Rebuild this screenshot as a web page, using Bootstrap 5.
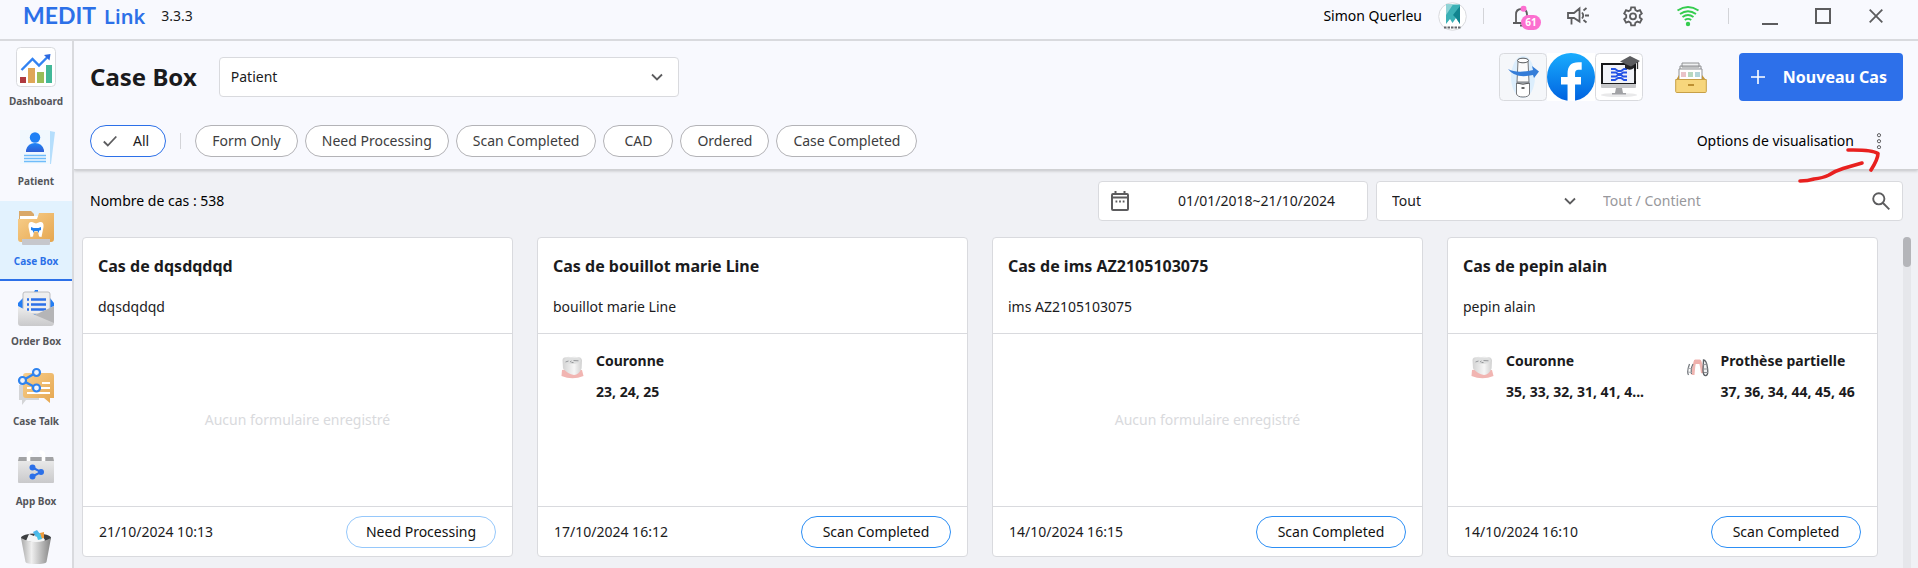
<!DOCTYPE html>
<html lang="fr">
<head>
<meta charset="utf-8">
<meta name="viewport" content="width=device-width, initial-scale=1">
<title>MEDIT Link - Case Box</title>
<link href="https://cdn.jsdelivr.net/npm/bootstrap@5.3.0/dist/css/bootstrap.min.css" rel="stylesheet">
<style>
  :root { --ml-blue: #2c70e8; --ml-line: #d9dade; --ml-top: #f8f9fe; --ml-grey: #5c5c5e; }
  body { font-family: "Noto Sans", "Open Sans", sans-serif; font-size: 14px; line-height: 20px; color: #1b1b1d; background: #f0f1f5; }
  svg { display: block; flex: none; }
  .titlebar { background: var(--ml-top); border-bottom: 2px solid var(--ml-line); padding: 0 16px 7px 23px; }
  .titlebar-row { height: 32px; }
  .brand { color: var(--ml-blue); font-size: 20px; font-weight: 600; line-height: 32px; gap: 8px; }
  .brand-first { font-family: Lato, "Noto Sans", sans-serif; font-weight: 700; font-size: 23px; }
  .tool-btn { width: 55px; height: 32px; padding: 0; border: 0; background: none; color: var(--ml-grey); display: flex; align-items: center; justify-content: center; position: relative; }
  .win-btn { width: 53px; }
  .tool-group { margin-left: 11px; }
  .tool-split { margin: 0 14px 0 13px; }
  .count-pill { position: absolute; left: 26px; top: 15px; width: 20px; height: 15px; border-radius: 8px; background: #fc6fd0; color: #fff; font-size: 10px; font-weight: 700; line-height: 15px; text-align: center; }
  .v-line { width: 1px; height: 16px; background: #d3d4d8; }
  .side { width: 74px; flex: none; background: var(--ml-top); border-right: 2px solid var(--ml-line); overflow: hidden; }
  .side-link { height: 80px; flex: none; padding-top: 6px; color: #55565a; font-size: 10px; font-weight: 700; line-height: 16px; text-decoration: none; display: flex; flex-direction: column; align-items: center; gap: 6px; }
  .side-link.active { background: #e2f2fe; color: var(--ml-blue); border-bottom: 2px solid var(--ml-blue); }
  .page-head { background: var(--ml-top); padding: 12px 15px 12px 16px; border-bottom: 1px solid #d0d1d3; box-shadow: 0 1px 3px rgba(0,0,0,.2); position: relative; }
  .page-title { font-size: 24px; line-height: 32px; font-weight: 700; margin: 0 22px 0 0; }
  .form-select { font-size: 14px; line-height: 20px; color: #1b1b1d; background-color: #fff; border: 1px solid var(--ml-line); border-radius: 4px; height: 40px; padding: 0 40px 0 11px;
    background-image: url("data:image/svg+xml,%3csvg xmlns='http://www.w3.org/2000/svg' viewBox='0 0 12 12'%3e%3cpath fill='none' stroke='%235c5c5e' stroke-width='1.8' d='M1 3.500l5 5 5-5'/%3e%3c/svg%3e"); background-size: 12px 12px; background-position: right 15px center; }
  .view-select { width: 460px; }
  .filter-row { gap: 7px; }
  .pill { height: 32px; border: 1px solid #b3b3b7; border-radius: 16px; background: #fff; color: #3d3d40; padding: 0 16px; min-width: 70px; line-height: 20px; white-space: nowrap; }
  .pill.active { border-color: var(--ml-blue); color: #1b1b1d; padding-left: 12px; }
  .pill-split { margin: 0 7px; }
  .view-options { font-size: 14px; line-height: 20px; gap: 22px; padding: 0 21px 0 0; border: 0; background: none; color: #000; }
  .new-case { width: 164px; height: 48px; border-radius: 4px; background: #2d70ea; color: #fff; font-size: 16px; font-weight: 700; padding: 0 16px 0 12px; border: 0; }
  .ink { position: absolute; right: 37px; top: 107px; pointer-events: none; }
  .list-bar { padding: 11px 15px 16px 16px; }
  .field { height: 40px; background: #fff; border: 1px solid var(--ml-line); border-radius: 4px; overflow: hidden; }
  .field input { border: 0; background: none; outline: 0; min-width: 0; color: #1b1b1d; }
  .field input::placeholder { color: #98989c; opacity: 1; }
  .field .form-select { border: 0; height: 38px; width: 208px; padding-left: 15px; background-position: right 9px center; }
  .date-field { width: 270px; padding-left: 11px; }
  .find-field { width: 527px; }
  .list-area { padding: 0 7px 0 8px; gap: 25px; min-height: 0; }
  .case { border: 1px solid var(--ml-line); border-radius: 4px; background: #fff; height: 320px; display: flex; flex-direction: column; }
  .case-head { height: 95px; padding: 17px 15px 0; }
  .case-head h2 { font-size: 16px; line-height: 22px; font-weight: 700; margin: 0 0 20px; }
  .case-body { flex: 1; border-top: 1px solid var(--ml-line); border-bottom: 1px solid var(--ml-line); }
  .case-foot { height: 49px; padding: 0 16px; }
  .state { width: 150px; height: 32px; border: 1px solid #2d8ff5; border-radius: 16px; background: #fff; color: #111; padding: 0; }
  .state-wait { border-color: #96c8fb; }
  .empty-note { color: #d9dadd; }
  .part { padding: 17px 0 0 23px; gap: 12px; font-weight: 700; }
  .part p { margin: 0 0 11px; }
  .part svg { margin-top: 5px; }
  .track { width: 8px; flex: none; background: #e6e7eb; border-radius: 4px 4px 0 0; }
  .thumb { height: 30px; border-radius: 4px; background: #b4b5b9; }
</style>
</head>
<body class="vh-100 overflow-hidden d-flex flex-column">

<svg width="0" height="0" class="position-absolute" aria-hidden="true">
  <defs>
    <linearGradient id="gFolder" x1="0" y1="0" x2="1" y2="1"><stop offset="0" stop-color="#f8cf8c"/><stop offset="1" stop-color="#e5a64f"/></linearGradient>
    <linearGradient id="gGrey" x1="0" y1="0" x2="0" y2="1"><stop offset="0" stop-color="#eeeeee"/><stop offset="1" stop-color="#c9c9cb"/></linearGradient>
    <linearGradient id="gCan" x1="0" y1="0" x2="1" y2="0"><stop offset="0" stop-color="#a9a9a9"/><stop offset=".35" stop-color="#efefef"/><stop offset="1" stop-color="#858585"/></linearGradient>
    <linearGradient id="gBlue" x1="0" y1="0" x2="0" y2="1"><stop offset="0" stop-color="#1e86f8"/><stop offset="1" stop-color="#2f5cd2"/></linearGradient>
    <linearGradient id="gFb" x1="0" y1="0" x2="0" y2="1"><stop offset="0" stop-color="#18acfe"/><stop offset="1" stop-color="#0163e0"/></linearGradient>
    <linearGradient id="gTooth" x1="0" y1="0" x2="1" y2="0"><stop offset="0" stop-color="#d3d3d3"/><stop offset=".6" stop-color="#f6f6f6"/><stop offset="1" stop-color="#d0d0d0"/></linearGradient>
    <symbol id="crown" viewBox="0 0 23 23">
      <path d="M1 14q10-2 20 0l1.500 6q-11 4.500-22 0z" fill="#f1b5b2"/>
      <path d="M1.500 4Q2 .8 5 1.200q2.500-1 5 0 3-1.200 6 0 4-.6 5 3l-.4 8.300Q18 18.500 13 19 7 18 2 12.500z" fill="url(#gTooth)"/>
      <ellipse cx="11.300" cy="4.800" rx="8.500" ry="3.200" fill="#dedfdf"/>
      <path d="M4.500 6l3-1M9 6l1.500-1M12.500 4.500l5 .3M10.500 6.500h2" stroke="#96989b" fill="none"/>
    </symbol>
  </defs>
</svg>

<header class="titlebar">
  <div class="titlebar-row d-flex align-items-center">
    <div class="brand d-flex align-items-baseline text-nowrap"><span class="brand-first">MEDIT</span><span>Link</span></div>
    <span class="ms-3">3.3.3</span>
    <span class="ms-auto text-black">Simon Querleu</span>
    <svg class="ms-3" width="29" height="29" viewBox="0 0 29 29"><circle cx="14.500" cy="14.500" r="13.800" fill="#fff" stroke="#d9dade"/><path d="M8 2.500h14V22l-4-6-3.500 5L12 17l-4 5z" fill="#3cb1b6"/><path d="M8 2.500h7L8 13z" fill="#8fd3d6"/><path d="M22 4v18l-4-6-3-3z" fill="#11848f"/><path d="M6 25.500h17" stroke="#65676b" stroke-width="2" stroke-dasharray="2.500 1"/></svg>
    <span class="v-line ms-3"></span>
    <div class="d-flex tool-group">
      <button class="tool-btn" type="button" aria-label="Notifications">
        <svg width="22" height="22" viewBox="0 0 22 22" fill="none" stroke="currentColor" stroke-width="1.800"><path d="M1 18h14M4 17V9.500Q4 4 9.500 4T15 9.500V17M8 20.500h4"/><circle cx="11.500" cy="3.800" r="3" fill="#fc6fd0" stroke="none"/></svg>
        <span class="count-pill">61</span>
      </button>
      <button class="tool-btn" type="button" aria-label="Annonces"><svg width="22" height="20" viewBox="0 0 22 20" fill="none" stroke="currentColor" stroke-width="1.800"><path d="M1 7h6l5.500-4.500v13L7 12H1zM4.500 12v6.500M15 6.500q2.500 3 0 6M16.500 4.500l3-2.500M18 9.500h4M16.500 14l3 2.500"/></svg></button>
      <button class="tool-btn" type="button" aria-label="Paramètres"><svg width="22" height="22" viewBox="0 0 24 24" fill="none" stroke="currentColor" stroke-width="2"><path d="M10 2.500h4l.6 2.900 2.200 1.300 2.800-1 2 3.500-2.200 1.900v2.600l2.200 1.900-2 3.500-2.800-1-2.200 1.300-.6 2.900h-4l-.6-2.900-2.200-1.300-2.800 1-2-3.500 2.200-1.900v-2.600L2.400 9.200l2-3.500 2.800 1 2.200-1.300z"/><circle cx="12" cy="12.400" r="3.300"/></svg></button>
      <button class="tool-btn" type="button" aria-label="Réseau"><svg width="24" height="22" viewBox="0 0 24 22" fill="none" stroke="#34cc4e" stroke-width="1.900"><path d="M1.500 5.500q10.500-7 21 0M4 9q8-5.500 16 0M6.500 12q5.500-4 11 0M8.800 15q3.200-2.300 6.400 0"/><circle cx="12" cy="19" r="2.200" fill="#34cc4e" stroke="none"/></svg></button>
    </div>
    <span class="v-line tool-split"></span>
    <div class="d-flex">
      <button class="tool-btn win-btn" type="button" aria-label="Réduire"><svg width="16" height="18" viewBox="0 0 16 18"><path d="M0 17h16" stroke="currentColor" stroke-width="2"/></svg></button>
      <button class="tool-btn win-btn" type="button" aria-label="Agrandir"><svg width="16" height="16" viewBox="0 0 16 16"><path d="M1 1h14v14H1z" fill="none" stroke="currentColor" stroke-width="2"/></svg></button>
      <button class="tool-btn win-btn" type="button" aria-label="Fermer"><svg width="14" height="14" viewBox="0 0 14 14"><path d="M.7.7l12.600 12.600M13.300.7L.7 13.300" stroke="currentColor" stroke-width="1.800"/></svg></button>
    </div>
  </div>
</header>

<div class="d-flex flex-grow-1" style="min-height:0">
  <nav class="side d-flex flex-column">
    <a class="side-link" href="#"><svg width="40" height="40" viewBox="0 0 40 40"><rect x=".5" y=".5" width="39" height="39" rx="4" fill="#fff" stroke="#d9dade"/><path d="M4 30h6v6H4z" fill="#b03a40"/><path d="M12 21h7v15h-7z" fill="#dfa657"/><path d="M21 25h7v11h-7z" fill="#98bd58"/><path d="M30 18h6v18h-6z" fill="#42b898"/><path d="M5.500 23L16.500 12l6.500 6.500L32 9.500" fill="none" stroke="#3282f2" stroke-width="2.400"/><path d="M28 8l6.500-1-1 6.500z" fill="#2c68df"/></svg>Dashboard</a>
    <a class="side-link" href="#"><svg width="40" height="40" viewBox="0 0 40 40"><path d="M34 4l5 1-4 32h-5z" fill="#b5defc"/><path d="M4 3h30v34H4z" fill="#f1f8fe"/><circle cx="19" cy="10.500" r="5.200" fill="#1f80f5"/><path d="M10 25v-2q2-7 9-7t9 7v2z" fill="url(#gBlue)"/><path d="M8 28.500h22M8 31.500h22M8 34.500h22" stroke="#6fbcfa" stroke-width="1.500"/></svg>Patient</a>
    <a class="side-link active" href="#" aria-current="page"><svg width="40" height="40" viewBox="0 0 40 40"><path d="M3 4h12l3 3v8H3z" fill="#d9a869"/><path d="M4 9h18v5H4z" fill="#fff"/><path d="M2 12h19l2-6h15v26q0 3-3 3H5q-3 0-3-3z" fill="url(#gFolder)"/><path d="M6 32h28v5q0 1-1 1H7q-1 0-1-1z" fill="#c6c7cc"/><path d="M12.500 20q-.5-5.500 3.500-5l4 1.500 4-1.500q4-.5 3.500 5l-2 10-2.500-.5-1-5h-4l-1 5-2.500.5z" fill="#fff"/><path d="M15 20l2.500 1h5l2.500-1v3l-2 .8V26l-1.500-2h-3L17 26v-2.200l-2-.8z" fill="#2481ec"/></svg>Case Box</a>
    <a class="side-link" href="#"><svg width="40" height="40" viewBox="0 0 40 40"><path d="M2 16l5-5h27l4 5v12H2z" fill="#247df3"/><path d="M18 5h4V3h-3z" fill="#247df3"/><path d="M7 7q0-2 2-2h23q2 0 2 2v20H7z" fill="#eeeeef" stroke="#bdbdc0"/><path d="M11 12.500h2m2 0h15M11 17.500h2m2 0h15M11 22.500h2m2 0h15" stroke="#2c70e8" stroke-width="2.600"/><path d="M2 19l17 9 19-9v17q0 3-3 3H5q-3 0-3-3z" fill="url(#gGrey)"/><path d="M19 28l19-9v17z" fill="#b5b5b7"/></svg>Order Box</a>
    <a class="side-link" href="#"><svg width="40" height="40" viewBox="0 0 40 40"><path d="M3 18h20v15H10l-4 5v-5H3z" fill="#d4d5d7"/><path d="M10 6h25q3 0 3 3v22h-4v5l-6-5H10q-3 0-3-3V9q0-3 3-3z" fill="url(#gFolder)"/><path d="M26 16h8M25 21h9M11 21h4M11 26h23" stroke="#fff" stroke-width="1.800"/><path d="M6.500 13.500l14-8M6.500 13.500l14 7.500" stroke="#2f83ee" stroke-width="2.400"/><g fill="#f0f3f8" stroke="#2f83ee" stroke-width="2.200"><circle cx="20.500" cy="5.500" r="3.500"/><circle cx="6.500" cy="13.500" r="3.500"/><circle cx="20.500" cy="21" r="3.500"/></g></svg>Case Talk</a>
    <a class="side-link" href="#"><svg width="40" height="40" viewBox="0 0 40 40"><path d="M2 10h36v25q0 1-1 1H3q-1 0-1-1z" fill="url(#gGrey)"/><path d="M3 10h34l1 4H2z" fill="#a2a3a5"/><path d="M12.500 14V8q0-3 4-3M27.500 14V8q0-3-4-3" stroke="#fff" stroke-width="3.600" fill="none"/><path d="M16.500 20.500l8.500 4.500-8.500 4.500" stroke="#2c70e8" stroke-width="2" fill="none"/><g fill="#2c70e8"><circle cx="16.500" cy="20.500" r="3"/><circle cx="25" cy="25" r="3"/><circle cx="16.500" cy="29.500" r="3"/></g></svg>App Box</a>
    <a class="side-link" href="#" aria-label="Corbeille"><svg width="40" height="40" viewBox="0 0 40 40"><ellipse cx="20" cy="11" rx="15" ry="4.500" fill="#3c3e41"/><path d="M10 14l3-7 5 2 3-5 4 3 4 6-2 4z" fill="#f4f5f6"/><path d="M17 5l4-2 3 4-4 3z" fill="#4bb4ea"/><path d="M24 6l4-1v6l-4 1z" fill="#ef9a3b"/><path d="M20 7l4-1 2 6-4 1z" fill="#49c3e7"/><path d="M5 11q15 8 30 0l-4.500 24q-1 2-10.500 2t-10.500-2z" fill="url(#gCan)"/></svg></a>
  </nav>

  <main class="flex-grow-1 d-flex flex-column overflow-hidden" style="min-width:0">
    <section class="page-head">
      <div class="d-flex align-items-center mb-4">
        <h1 class="page-title">Case Box</h1>
        <select class="form-select view-select" aria-label="Affichage"><option>Patient</option></select>
        <div class="d-flex ms-auto">
          <svg width="48" height="48" viewBox="0 0 48 48"><rect x=".5" y=".5" width="47" height="47" rx="4" fill="#f5f7fa" stroke="#d9dade"/><ellipse cx="24" cy="24" rx="12" ry="21" fill="#dceefd"/><path d="M18 29l1-21h10l1 21z" fill="#fbfbfb" stroke="#77797c"/><ellipse cx="24" cy="7.500" rx="5.500" ry="2.300" fill="#fff" stroke="#55575a"/><path d="M17.500 30h13v11q-1 3-6.500 3t-6.500-3z" fill="#fff" stroke="#77797c"/><path d="M17.500 30q6.500 2.500 13 0" fill="none" stroke="#55575a"/><path d="M22.500 35h3" stroke="#333" stroke-width="1.500"/><path d="M9 16q9 5 25 1l-1-4 7 5.500-5 6.500-1-3Q16 26 9 16z" fill="#357dd8"/></svg>
          <svg width="48" height="48" viewBox="0 0 48 48"><path d="M0 0h48v48H0z" fill="#fff"/><circle cx="24" cy="24" r="24" fill="url(#gFb)"/><path d="M24.300 48V20.500q0-7.500 7-7.500h3.400M14 27.700h20" fill="none" stroke="#fff" stroke-width="7.500"/></svg>
          <svg width="48" height="48" viewBox="0 0 48 48"><rect x=".5" y=".5" width="47" height="47" rx="4" fill="#fff" stroke="#d9dade"/><ellipse cx="24" cy="42" rx="18" ry="2" fill="#e9e9ea"/><path d="M6 10h35v22H6z" fill="#17181a"/><path d="M8 12h31v18H8z" fill="#f1f3f8"/><path d="M6 31h35v3q0 1-1 1H7q-1 0-1-1z" fill="#c7c8ca"/><path d="M21 35h6l1 5h3v1.500H17V40h3z" fill="#a1a2a5"/><path d="M16 16h4l3 2h3l3-2h3M16 19.500h5l2 1.500h3l2-1.500h4M16 23.500h5l2-1.500h3l2 1.500h4M16 27h4l3-2h3l3 2h3" fill="none" stroke="#2454e6" stroke-width="1.900"/><path d="M30 10v5q5 3.500 9 0v-5z" fill="#242528"/><path d="M25 8.500L35 3l10 5-9 5.500z" fill="#5c5d60"/><path d="M42.500 9v7M40 18v10" stroke="#333" stroke-width="1.300"/></svg>
        </div>
        <svg class="mx-4 px-2" style="box-sizing:content-box" width="32" height="34" viewBox="0 0 32 34"><path d="M7 3h17v4H7zM5 6h21v5H5z" fill="#eff0f1" stroke="#909194"/><path d="M4 9h23v12H4z" fill="#fff" stroke="#909194"/><path d="M6 12h5v5H6z" fill="#e9c3c8"/><path d="M13 12h5v5h-5z" fill="#b7d8bf"/><path d="M20 12h5v5h-5z" fill="#b3d5da"/><path d="M6 19h5v2H6zm7 0h5v2h-5zm7 0h5v2h-5z" fill="#d6e0e8"/><path d="M4 15v6h23v-6l4 5H1z" fill="#c4973b"/><path d="M.7 19.500h30.600v12q0 1-1 1H1.700q-1 0-1-1z" fill="#f7d67c" stroke="#c7a047"/><path d="M13 25h6" stroke="#bd8f31" stroke-width="2"/></svg>
        <button class="btn new-case d-flex align-items-center justify-content-between" type="button"><svg width="14" height="14" viewBox="0 0 14 14"><path d="M7 0v14M0 7h14" stroke="#fff" stroke-width="1.600"/></svg>Nouveau Cas</button>
      </div>
      <div class="d-flex align-items-center filter-row">
        <button class="pill active d-flex align-items-center gap-3" type="button"><svg width="14" height="12" viewBox="0 0 14 12"><path d="M.8 6.500l4 4L13.300 1.500" fill="none" stroke="#5c5c5e" stroke-width="1.800"/></svg>All</button>
        <span class="v-line pill-split"></span>
        <button class="pill" type="button">Form Only</button>
        <button class="pill" type="button">Need Processing</button>
        <button class="pill" type="button">Scan Completed</button>
        <button class="pill" type="button">CAD</button>
        <button class="pill" type="button">Ordered</button>
        <button class="pill" type="button">Case Completed</button>
        <button class="view-options ms-auto d-flex align-items-center" type="button">Options de visualisation<svg width="6" height="16" viewBox="0 0 6 16" fill="none" stroke="#5c5c5e"><circle cx="3" cy="2.200" r="1.600"/><circle cx="3" cy="8.200" r="1.600"/><circle cx="3" cy="14.200" r="1.600"/></svg></button>
      </div>
      <svg class="ink" width="84" height="36" viewBox="0 0 84 36" fill="none" stroke="#e8201f" stroke-width="3.600" stroke-linecap="round" stroke-linejoin="round"><path d="M3 33q8 0 14-2 9-1 15-4 6-4 14-6.500L65 15"/><path d="M51 2q24-.5 30 3.500Q81 11 74 22"/></svg>
    </section>

    <div class="list-bar d-flex align-items-center gap-2">
      <span class="me-auto text-black">Nombre de cas : 538</span>
      <label class="field date-field d-flex align-items-center">
        <svg width="20" height="22" viewBox="0 0 20 22" fill="none" stroke="#5c5c5e" stroke-width="2"><rect x="2" y="4" width="16" height="16" rx="1"/><path d="M2 7.500h16M5.500 1v4M14.500 1v4"/><path d="M5.500 11.500h9" stroke-dasharray="1.800 1.800"/></svg>
        <input class="flex-grow-1 text-center ms-3" type="text" value="01/01/2018~21/10/2024" aria-label="Période">
      </label>
      <div class="field find-field d-flex align-items-center">
        <select class="form-select" aria-label="Champ de recherche"><option>Tout</option></select>
        <input class="flex-grow-1 ms-3" type="text" placeholder="Tout / Contient" aria-label="Recherche">
        <button class="tool-btn win-btn w-auto ps-2 pe-1 me-2" type="button" aria-label="Rechercher"><svg width="18" height="18" viewBox="0 0 18 18" fill="none" stroke="currentColor" stroke-width="1.900"><circle cx="6.800" cy="6.800" r="5.600"/><path d="M11 11l6.300 6.300"/></svg></button>
      </div>
    </div>

    <div class="list-area d-flex flex-grow-1">
      <div class="flex-grow-1">
        <div class="row row-cols-4 g-4 mt-0">
          <div class="col mt-0"><article class="case">
            <div class="case-head"><h2>Cas de dqsdqdqd</h2><div>dqsdqdqd</div></div>
            <div class="case-body d-flex align-items-center justify-content-center empty-note">Aucun formulaire enregistré</div>
            <div class="case-foot d-flex align-items-center justify-content-between">21/10/2024 10:13<button class="state state-wait" type="button">Need Processing</button></div>
          </article></div>
          <div class="col mt-0"><article class="case">
            <div class="case-head"><h2>Cas de bouillot marie Line</h2><div>bouillot marie Line</div></div>
            <div class="case-body row g-0">
              <div class="col-6 part d-flex"><svg width="23" height="23"><use href="#crown"/></svg><div><p>Couronne</p><p>23, 24, 25</p></div></div>
            </div>
            <div class="case-foot d-flex align-items-center justify-content-between">17/10/2024 16:12<button class="state" type="button">Scan Completed</button></div>
          </article></div>
          <div class="col mt-0"><article class="case">
            <div class="case-head"><h2>Cas de ims AZ2105103075</h2><div>ims AZ2105103075</div></div>
            <div class="case-body d-flex align-items-center justify-content-center empty-note">Aucun formulaire enregistré</div>
            <div class="case-foot d-flex align-items-center justify-content-between">14/10/2024 16:15<button class="state" type="button">Scan Completed</button></div>
          </article></div>
          <div class="col mt-0"><article class="case">
            <div class="case-head"><h2>Cas de pepin alain</h2><div>pepin alain</div></div>
            <div class="case-body row g-0">
              <div class="col-6 part d-flex"><svg width="23" height="23"><use href="#crown"/></svg><div><p>Couronne</p><p class="text-nowrap">35, 33, 32, 31, 41, 4...</p></div></div>
              <div class="col-6 part d-flex"><svg width="23" height="23" viewBox="0 0 23 23" fill="none"><path d="M7 19Q8 6 9.500 5h4Q15 6 16.500 17" stroke="#f0b6b2" stroke-width="3"/><path d="M8 4h7v4H8z" fill="#eeb0ac"/><path d="M2.500 19Q.5 16 3.500 8M7 8Q4.500 12 5.500 18" stroke="#6f7378" stroke-width="1.200"/><path d="M2 12l4 1M2 16l4 .5" stroke="#a5a8ac"/><path d="M17.500 4q3 0 4 8 1 7-1.500 7.500-3 .5-3-5.500z" fill="#f1f1f2" stroke="#5d6166" stroke-width="1.300"/><path d="M17 9l4-1M18 13h4M18 16.500h4" stroke="#8d9094"/></svg><div><p>Prothèse partielle</p><p class="text-nowrap">37, 36, 34, 44, 45, 46</p></div></div>
            </div>
            <div class="case-foot d-flex align-items-center justify-content-between">14/10/2024 16:10<button class="state" type="button">Scan Completed</button></div>
          </article></div>
        </div>
      </div>
      <div class="track"><div class="thumb"></div></div>
    </div>
  </main>
</div>
<script src="https://cdn.jsdelivr.net/npm/bootstrap@5.3.0/dist/js/bootstrap.bundle.min.js"></script>
</body>
</html>
